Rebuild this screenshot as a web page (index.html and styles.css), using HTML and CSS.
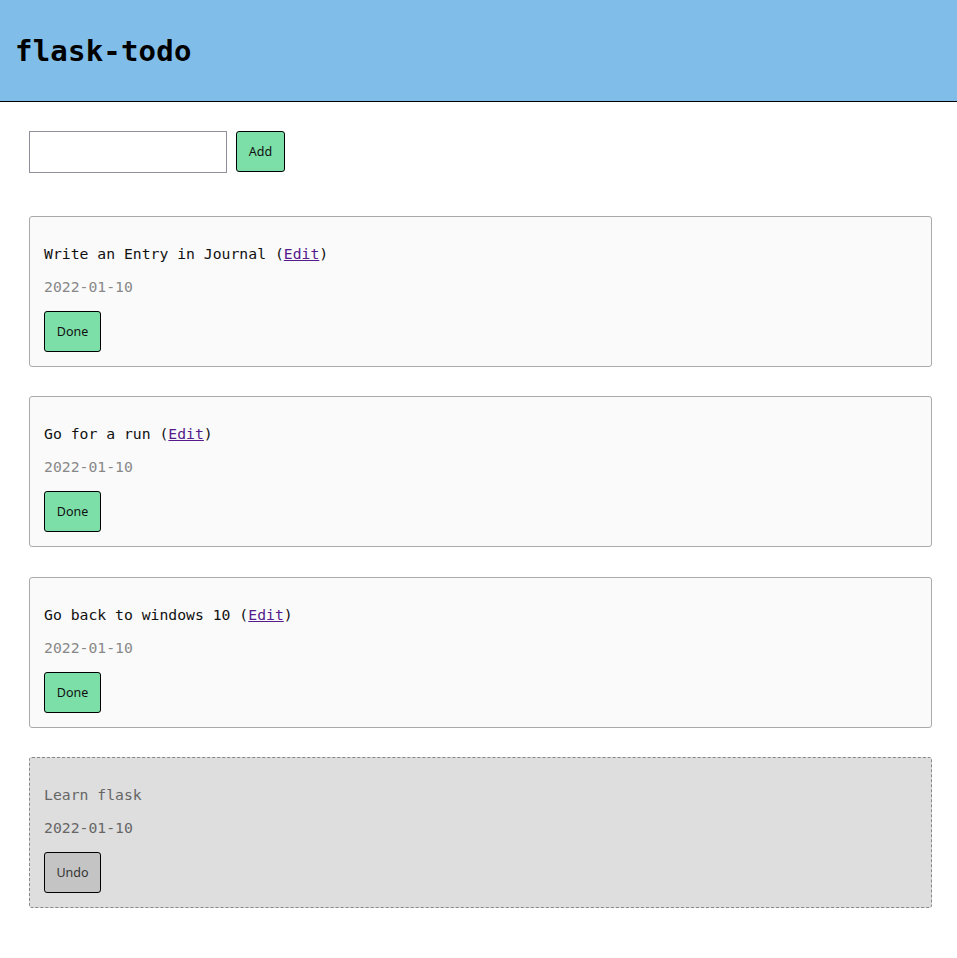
FILE: index.html
```html
<!DOCTYPE html>
<html>
<head>
<meta charset="utf-8">
<title>flask-todo</title>
<link rel="stylesheet" href="styles.css">
</head>
<body>
<header class="topbar">
  <h1 class="brand">flask-todo</h1>
</header>
<main class="content">
  <form class="add-form">
    <input class="add-input" type="text">
    <button class="btn" type="button">Add</button>
  </form>
  <div class="todo-list">
    <div class="todo">
      <p class="todo-title">Write an Entry in Journal (<a class="edit" href="#">Edit</a>)</p>
      <p class="todo-date">2022-01-10</p>
      <button class="btn" type="button">Done</button>
    </div>
    <div class="todo">
      <p class="todo-title">Go for a run (<a class="edit" href="#">Edit</a>)</p>
      <p class="todo-date">2022-01-10</p>
      <button class="btn" type="button">Done</button>
    </div>
    <div class="todo">
      <p class="todo-title">Go back to windows 10 (<a class="edit" href="#">Edit</a>)</p>
      <p class="todo-date">2022-01-10</p>
      <button class="btn" type="button">Done</button>
    </div>
    <div class="todo todo-done">
      <p class="todo-title">Learn flask</p>
      <p class="todo-date">2022-01-10</p>
      <button class="btn btn-undo" type="button">Undo</button>
    </div>
  </div>
</main>
</body>
</html>
```
FILE: styles.css
```css
html, body {
  margin: 0;
  padding: 0;
  background: #fff;
}
body {
  font-family: "DejaVu Sans Mono", "Liberation Mono", monospace;
  font-size: 14.75px;
  color: #111;
}
.topbar {
  background: #80bde8;
  border-bottom: 1px solid #000;
  height: 101px;
  display: flex;
  align-items: center;
  padding-left: 15px;
}
.brand {
  margin: 0;
  font-size: 29px;
  font-weight: bold;
  color: #000;
  letter-spacing: 0.2px;
}
.content {
  padding: 29px 25px 29px 29px;
}
.add-form {
  display: flex;
  align-items: flex-start;
  gap: 9px;
  margin: 0 0 43px 0;
}
.add-input {
  width: 198px;
  height: 42px;
  box-sizing: border-box;
  border: 1px solid #8f8f9d;
  border-radius: 0;
  padding: 2px 6px;
  font-size: 14px;
  background: #fff;
}
.btn {
  font-family: "Noto Sans", "Open Sans", sans-serif;
  font-size: 12.5px;
  color: #111;
  background: #7ddfa8;
  border: 1px solid #000;
  border-radius: 3px;
  height: 41px;
  padding: 0 12px;
  cursor: pointer;
}
.add-form .btn {
  width: 49px;
  padding: 0;
}
.todo-list {
  display: flex;
  flex-direction: column;
  gap: 29.33px;
}
.todo {
  background: #fafafa;
  border: 1px solid #aaa;
  border-radius: 3px;
  padding: 13px 14px 14px 14px;
  height: 151px;
  box-sizing: border-box;
}
.todo p {
  margin: 15px 0 0 0;
  line-height: 18px;
}
.todo .btn {
  margin-top: 15px;
  width: 57px;
  padding: 0;
  display: block;
}
.todo-date {
  color: #888;
}
.edit {
  color: #551a8b;
  text-decoration: underline;
}
.todo-done {
  background: #dedede;
  border: 1px dashed #888;
}
.todo-done .todo-title {
  color: #666;
}
.todo-done .todo-date {
  color: #666;
}
.btn-undo {
  background: #c4c4c4;
  color: #333;
}
```
